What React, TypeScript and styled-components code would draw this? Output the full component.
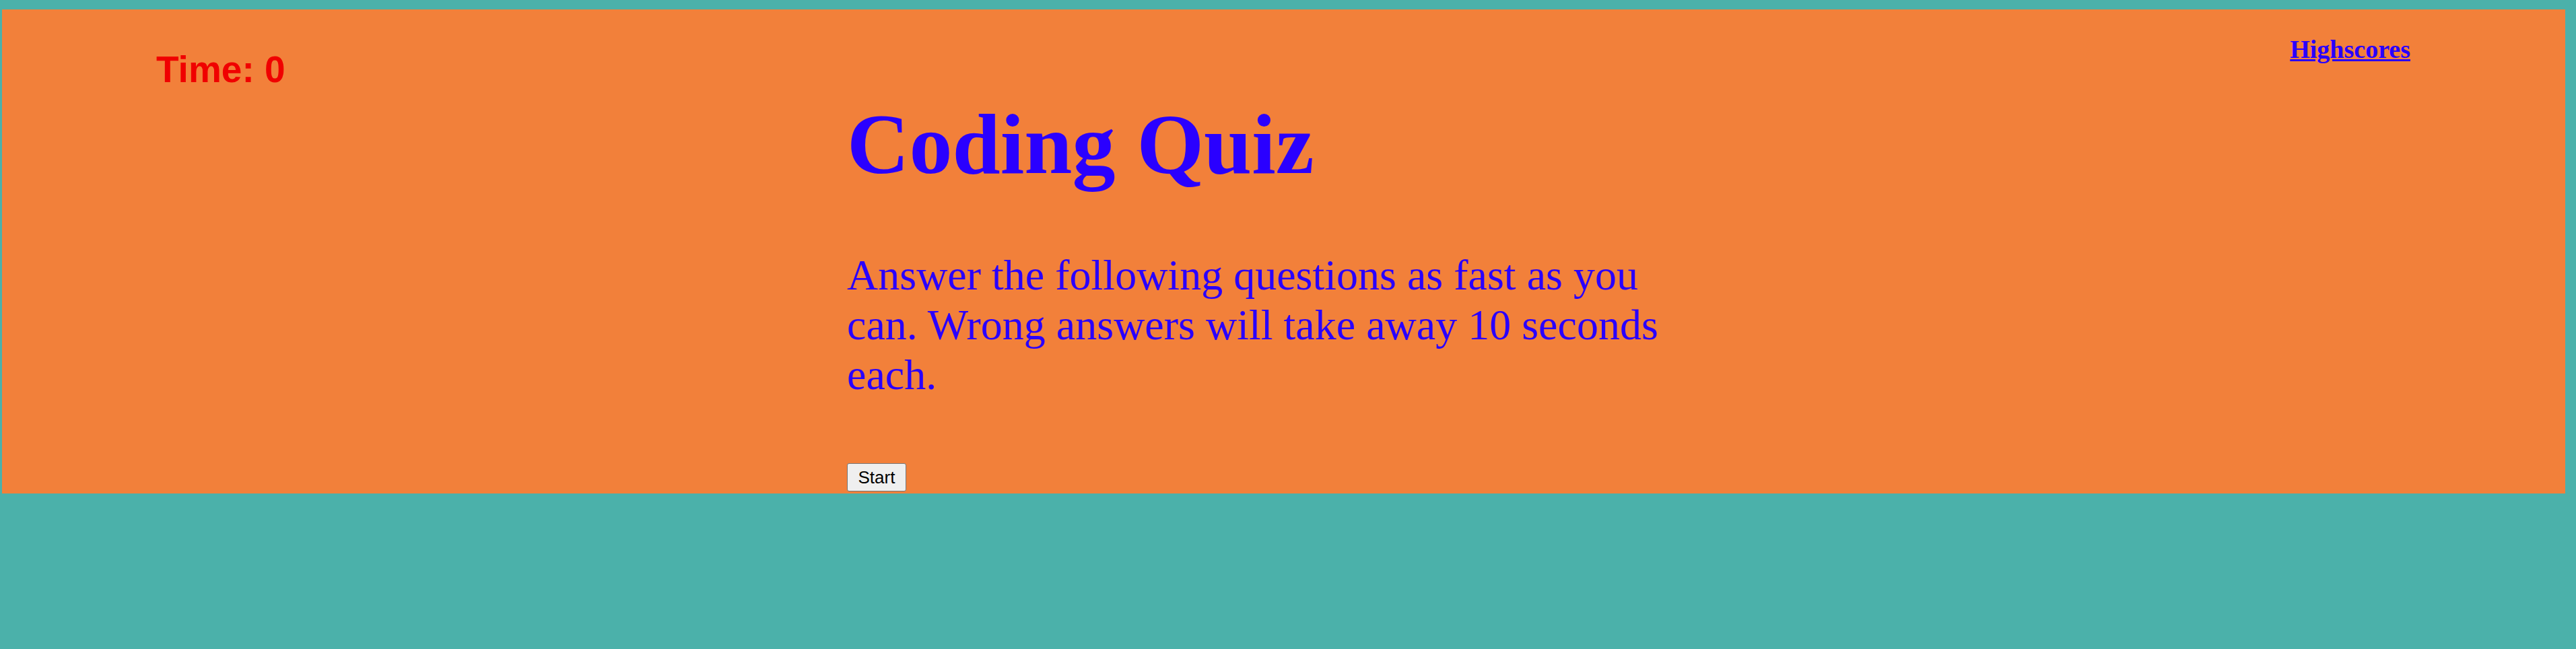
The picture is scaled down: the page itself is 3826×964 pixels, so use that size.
import React from "react";
import styled, { createGlobalStyle } from "styled-components";

const GlobalStyle = createGlobalStyle`
  html, body {
    margin: 0;
    padding: 0;
    background: #4bb1aa;
  }
  body {
    min-height: 964px;
    font-family: "Liberation Serif", "Times New Roman", serif;
  }
`;

const Page = styled.div`
  padding: 14px 16px 0 3px;
`;

const Panel = styled.main`
  background: #f2803a;
  height: 719px;
  box-sizing: border-box;
  padding: 0 230px 0 229px;
  display: flex;
  flex-direction: column;
`;

const Header = styled.header`
  display: flex;
  justify-content: space-between;
  align-items: flex-start;
`;

const Timer = styled.div`
  margin-top: 58px;
  font-family: "Liberation Sans", Arial, sans-serif;
  font-weight: bold;
  font-size: 55px;
  line-height: 63px;
  color: #f00000;
`;

const ScoresLink = styled.a`
  margin-top: 37px;
  font-family: "Liberation Serif", "Times New Roman", serif;
  font-weight: bold;
  font-size: 38px;
  line-height: 44px;
  color: #2a00ff;
  text-decoration: underline;
  cursor: pointer;
`;

const Content = styled.section`
  margin-left: 1026px;
  width: 1250px;
  display: flex;
  flex-direction: column;
  align-items: flex-start;
`;

const Title = styled.h1`
  margin: 4px 0 0;
  font-family: "Liberation Serif", "Times New Roman", serif;
  font-weight: bold;
  font-size: 128px;
  line-height: 150px;
  color: #2a00ff;
`;

const Intro = styled.p`
  margin: 83px 0 0;
  font-family: "Liberation Serif", "Times New Roman", serif;
  font-size: 64px;
  line-height: 74px;
  color: #2a00ff;
`;

const StartButton = styled.button`
  margin-top: 94px;
  width: 88px;
  height: 42px;
  padding: 0 8px;
  box-sizing: border-box;
  background: #efefef;
  border: 1px solid #767676;
  border-radius: 3px;
  font-family: "Liberation Sans", Arial, sans-serif;
  font-size: 26px;
  color: #000;
  cursor: pointer;
`;

export default function App() {
  return (
    <>
      <GlobalStyle />
      <Page>
        <Panel>
          <Header>
            <Timer>Time: 0</Timer>
            <ScoresLink>Highscores</ScoresLink>
          </Header>
          <Content>
            <Title>Coding Quiz</Title>
            <Intro>
              Answer the following questions as fast as you can. Wrong answers
              will take away 10 seconds each.
            </Intro>
            <StartButton>Start</StartButton>
          </Content>
        </Panel>
      </Page>
    </>
  );
}
